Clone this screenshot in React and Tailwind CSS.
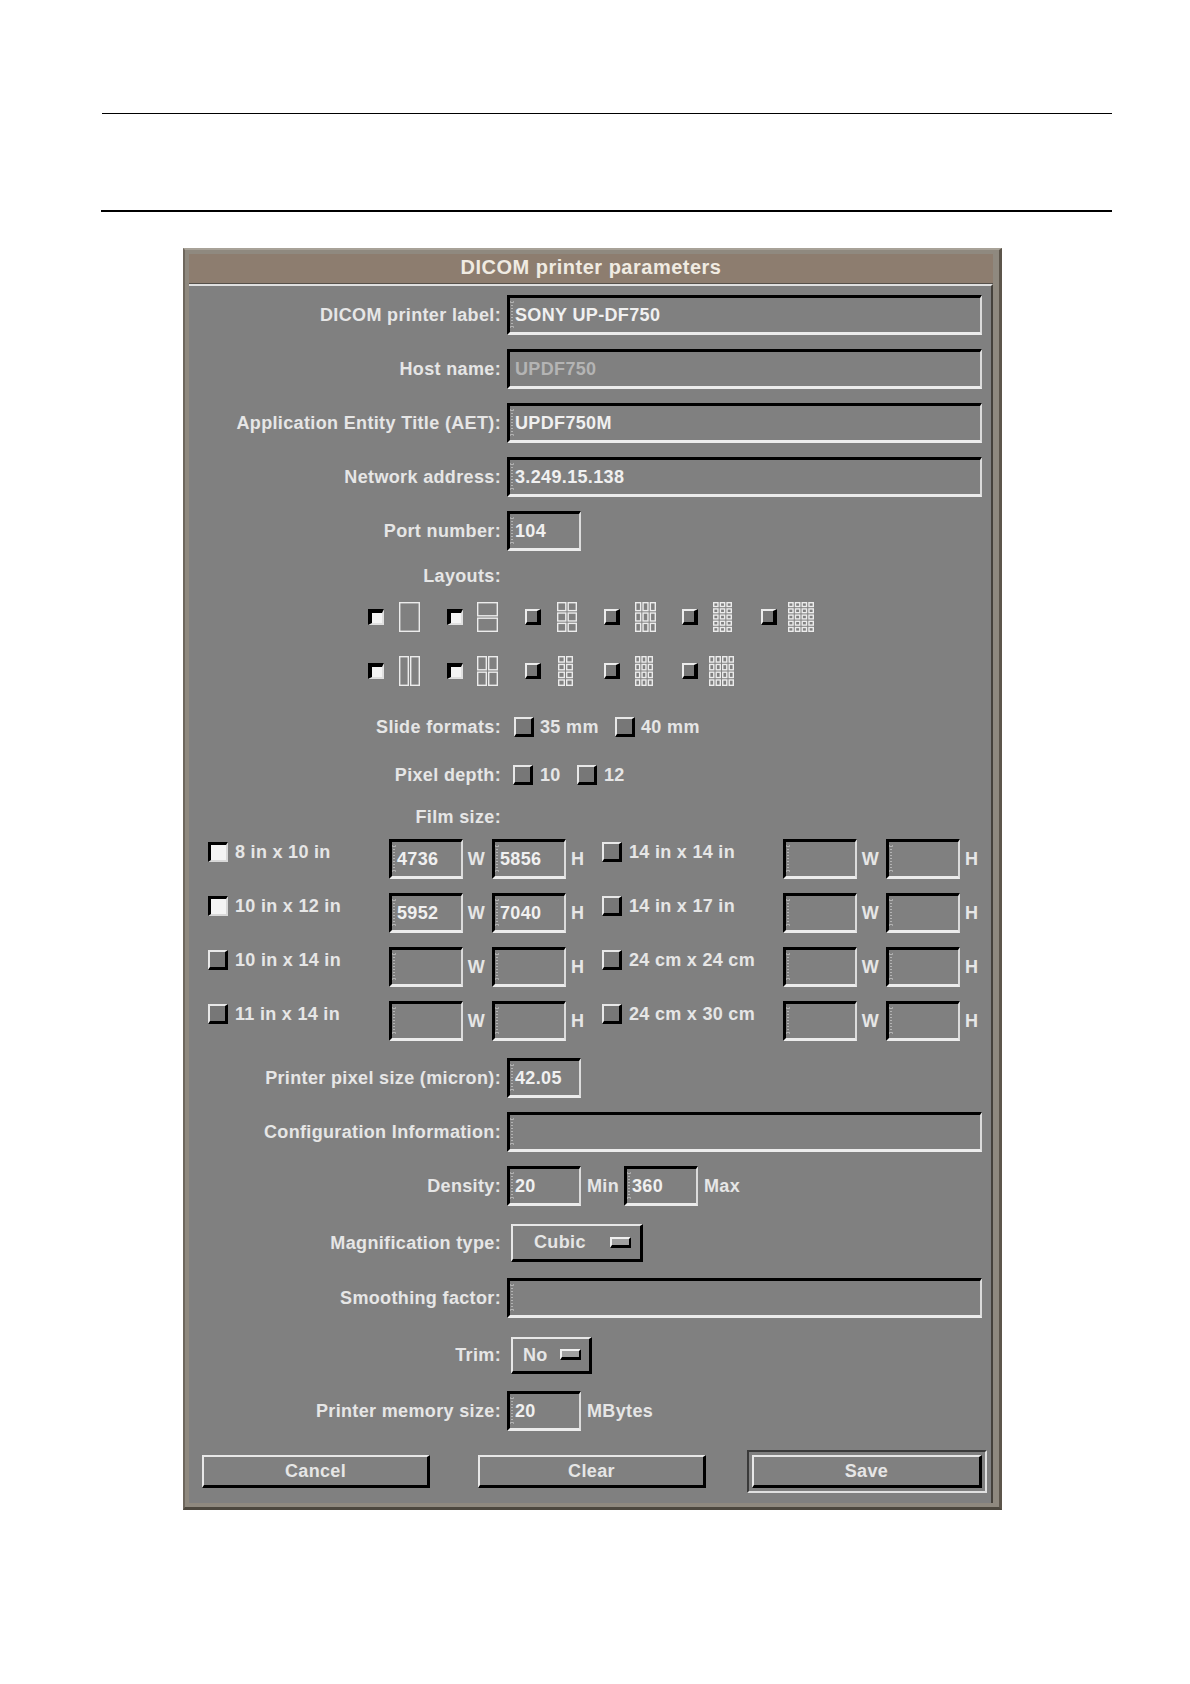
import React from "react";

const Cursor = () => (
  <svg width="5" height="28" viewBox="0 0 5 28" className="block shrink-0">
    <path d="M2 1V26" stroke="#e8e8e8" strokeWidth="1" strokeDasharray="1 2" fill="none" />
    <path d="M0 1H1M3 1H4M3 26H5M0 26H1" stroke="#d0d0d0" strokeWidth="1" strokeDasharray="1 1" fill="none" />
  </svg>
);

function Field({ value = "", wide = false, dim = false, className = "" }) {
  return (
    <div
      className={`flex h-[40px] items-center border-t-[3px] border-l-[3px] border-b-[3px] border-r-[2px] border-t-black border-l-black border-b-[#ececec] border-r-[#dcdcdc] ${
        wide ? "w-[475px]" : "w-[74px]"
      } ${className}`}
    >
      {dim ? <span className="ml-[5px]" /> : <Cursor />}
      <span className={dim ? "text-[#b4b4b4]" : "text-[#f0f0f0]"}>{value}</span>
    </div>
  );
}

const Label = ({ children }) => (
  <div className="w-[311px] shrink-0 text-right text-[#e6e6e6]">{children}</div>
);

function Row({ label, h = "h-[54px]", children }) {
  return (
    <div className={`flex items-center gap-[6px] ${h}`}>
      <Label>{label}</Label>
      {children}
    </div>
  );
}

function Check({ on = false, small = false }) {
  const size = small ? "h-[16px] w-[16px]" : "h-[20px] w-[20px]";
  const style = on
    ? small
      ? "border-t-[4px] border-l-[4px] border-b-[2px] border-r-[2px] border-t-black border-l-black border-b-[#e0e0e0] border-r-[#e0e0e0] bg-[#f4f4f4]"
      : "border-t-[3px] border-l-[3px] border-b-[2px] border-r-[2px] border-t-black border-l-black border-b-[#d8d8d8] border-r-[#d8d8d8] bg-[#f4f4f4]"
    : small
    ? "border-t-[2px] border-l-[2px] border-b-[3px] border-r-[4px] border-t-[#ececec] border-l-[#ececec] border-b-black border-r-black bg-[#777777]"
    : "border-t-[2px] border-l-[2px] border-b-[3px] border-r-[3px] border-t-[#e8e8e8] border-l-[#e8e8e8] border-b-black border-r-black bg-[#777777]";
  return <span className={`block shrink-0 ${size} ${style}`} />;
}

function LayoutIcon({ rows, cols, w }) {
  const gap = 1;
  const cw = (w - gap * (cols - 1)) / cols;
  const ch = (30 - gap * (rows - 1)) / rows;
  const cells = [];
  for (let r = 0; r < rows; r++) {
    for (let c = 0; c < cols; c++) {
      cells.push(
        <rect
          key={`${r}-${c}`}
          x={c * (cw + gap) + 0.7}
          y={r * (ch + gap) + 0.7}
          width={Math.max(cw - 1.4, 0.5)}
          height={Math.max(ch - 1.4, 0.5)}
          fill="none"
          stroke="#ececec"
          strokeWidth="1.4"
        />
      );
    }
  }
  return (
    <svg width={w} height={30} viewBox={`0 0 ${w} 30`} className="block shrink-0">
      {cells}
    </svg>
  );
}

function LayoutCell({ on, rows, cols, w, off }) {
  return (
    <div className="flex w-[78.5px] shrink-0 items-center">
      <Check on={on} small />
      <div className="shrink-0" style={{ marginLeft: off }}>
        <LayoutIcon rows={rows} cols={cols} w={w} />
      </div>
    </div>
  );
}

function Bevel({ className = "", children }) {
  return (
    <div
      className={`flex items-center border-t-[2px] border-l-[2px] border-b-[3px] border-r-[3px] border-t-[#e8e8e8] border-l-[#e8e8e8] border-b-black border-r-black ${className}`}
    >
      {children}
    </div>
  );
}

const Marker = () => (
  <span className="block h-[11px] w-[21px] shrink-0 border-t-[2px] border-l-[2px] border-b-[3px] border-r-[2px] border-t-[#f0f0f0] border-l-[#f0f0f0] border-b-black border-r-black bg-[#a0a0a0]" />
);

function FilmGroup({ on, label, w, h }) {
  return (
    <div className="flex w-[394px] shrink-0 items-center">
      <div className="flex w-[181px] shrink-0 items-center gap-[7px] pb-[14px] tracking-[0.3px]">
        <Check on={on} />
        <span className="text-[#e6e6e6]">{label}</span>
      </div>
      <Field value={w} />
      <span className="w-[27px] shrink-0 text-center text-[#e6e6e6]">W</span>
      <span className="w-[2px] shrink-0" />
      <Field value={h} />
      <span className="w-[35px] shrink-0 pl-[5px] text-[#e6e6e6]">H</span>
    </div>
  );
}

const films = [
  ["8 in x 10 in", "4736", "5856", true, "14 in x 14 in"],
  ["10 in x 12 in", "5952", "7040", true, "14 in x 17 in"],
  ["10 in x 14 in", "", "", false, "24 cm x 24 cm"],
  ["11 in x 14 in", "", "", false, "24 cm x 30 cm"],
];

export default function App() {
  return (
    <div
      className="min-h-[1684px] w-[1190px] bg-white pt-[113px] text-[18px] font-bold leading-none tracking-[0.35px]"
      style={{ fontFamily: '"Liberation Sans", Arial, sans-serif' }}
    >
      <div className="ml-[102px] h-px w-[1010px] bg-black" />
      <div className="ml-[101px] mt-[96px] h-[2px] w-[1011px] bg-black" />

      <div className="ml-[183px] mt-[36px] w-[819px] border-t-[2px] border-l-[2px] border-b-[3px] border-r-[3px] border-t-[#a8a298] border-l-[#6e675d] border-b-[#4d483f] border-r-[#5c554b] bg-[#8f897f] p-[4px] pr-[6px] pb-[4px]">
        <div className="flex h-[29px] items-center justify-center bg-[#8d7d6f] pb-[3px] text-[20px] tracking-[0.5px] text-[#f0ebe2]">
          DICOM printer parameters
        </div>
        <div className="h-[1px] bg-[#55504a]" />
        <div className="border-t-[2px] border-r-[2px] border-t-[#e0e0e0] border-r-[#45413b] bg-[#808080] pt-[2px] text-[#e6e6e6]">
          <div className="pl-[1px]">
            <Row label="DICOM printer label:"><Field wide value="SONY UP-DF750" /></Row>
            <Row label="Host name:"><Field wide dim value="UPDF750" /></Row>
            <Row label="Application Entity Title (AET):"><Field wide value="UPDF750M" /></Row>
            <Row label="Network address:"><Field wide value="3.249.15.138" /></Row>
            <Row label="Port number:"><Field value="104" /></Row>
            <Row label="Layouts:" h="h-[36px]" />

            <div className="flex h-[46px] items-center pl-[178px]">
              <LayoutCell on rows={1} cols={1} w={21} off={15} />
              <LayoutCell on rows={2} cols={1} w={21} off={14} />
              <LayoutCell rows={3} cols={2} w={20} off={16} />
              <LayoutCell rows={3} cols={3} w={21} off={15} />
              <LayoutCell rows={5} cols={3} w={19} off={15} />
              <LayoutCell rows={5} cols={4} w={26} off={11} />
            </div>
            <div className="flex h-[62px] items-center pl-[178px]">
              <LayoutCell on rows={1} cols={2} w={21} off={15} />
              <LayoutCell on rows={2} cols={2} w={21} off={14} />
              <LayoutCell rows={4} cols={2} w={15} off={17} />
              <LayoutCell rows={4} cols={3} w={18} off={15} />
              <LayoutCell rows={4} cols={4} w={25} off={11} />
            </div>

            <Row label="Slide formats:" h="h-[50px]">
              <div className="flex items-center pl-[7px]">
                <Check />
                <span className="ml-[6px] w-[75px]">35 mm</span>
                <Check />
                <span className="ml-[6px]">40 mm</span>
              </div>
            </Row>
            <Row label="Pixel depth:" h="h-[46px]">
              <div className="flex items-center pl-[6px]">
                <Check />
                <span className="ml-[7px] w-[37px]">10</span>
                <Check />
                <span className="ml-[7px]">12</span>
              </div>
            </Row>
            <Row label="Film size:" h="h-[34px] pt-[3px]" />

            {films.map((f) => (
              <div key={f[0]} className="flex h-[54px] items-center pl-[18px]">
                <FilmGroup on={f[3]} label={f[0]} w={f[1]} h={f[2]} />
                <FilmGroup label={f[4]} w="" h="" />
              </div>
            ))}

            <div className="mt-[3px]">
              <Row label="Printer pixel size (micron):"><Field value="42.05" /></Row>
            </div>
            <Row label="Configuration Information:"><Field wide /></Row>
            <Row label="Density:">
              <Field value="20" />
              <span className="w-[31px] shrink-0">Min</span>
              <Field value="360" />
              <span>Max</span>
            </Row>
            <Row label="Magnification type:" h="h-[59px]">
              <Bevel className="ml-[4px] h-[38px] w-[132px] justify-between pl-[21px] pr-[9px]">
                <span>Cubic</span>
                <Marker />
              </Bevel>
            </Row>
            <Row label="Smoothing factor:" h="h-[52px]"><Field wide /></Row>
            <Row label="Trim:" h="h-[62px]">
              <Bevel className="ml-[4px] h-[37px] w-[81px] justify-between pl-[10px] pr-[8px]">
                <span>No</span>
                <Marker />
              </Bevel>
            </Row>
            <Row label="Printer memory size:" h="h-[50px]">
              <Field value="20" />
              <span>MBytes</span>
            </Row>
            <div className="mt-[3px] flex h-[64px] items-center pl-[12px]">
              <Bevel className="h-[33px] w-[228px] justify-center">Cancel</Bevel>
              <Bevel className="ml-[48px] h-[33px] w-[228px] justify-center">Clear</Bevel>
              <div className="ml-[41px] border-t-[2px] border-l-[2px] border-b-[2px] border-r-[2px] border-t-[#3a3a3a] border-l-[#3a3a3a] border-b-[#e0e0e0] border-r-[#e0e0e0] p-[3px]">
                <Bevel className="h-[33px] w-[230px] justify-center">Save</Bevel>
              </div>
            </div>
          </div>
        </div>
      </div>
    </div>
  );
}
